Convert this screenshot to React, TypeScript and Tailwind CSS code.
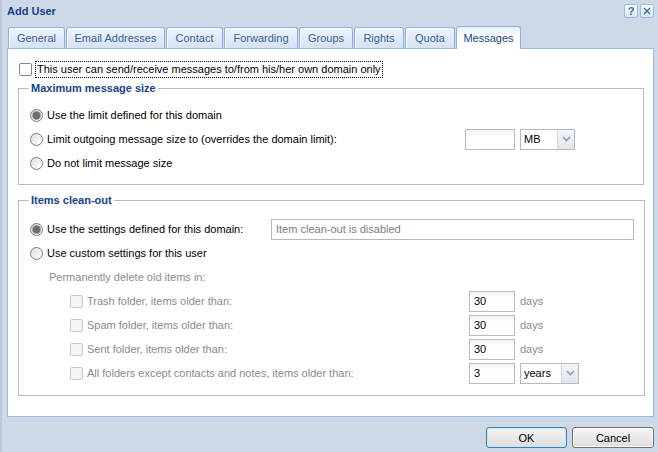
import type { ReactNode } from "react";

const tabs = [
    { label: "General", w: "w-[57px]" },
    { label: "Email Addresses", w: "w-[99px]" },
    { label: "Contact", w: "w-[57px]" },
    { label: "Forwarding", w: "w-[74px]" },
    { label: "Groups", w: "w-[54px]" },
    { label: "Rights", w: "w-[50px]" },
    { label: "Quota", w: "w-[50px]" },
    { label: "Messages", w: "w-[65px]", active: true },
];

function Radio({ checked }: { checked?: boolean }) {
    return (
        <span className="w-[13px] h-[13px] shrink-0 rounded-full border border-[#7a7a7a] bg-gradient-to-br from-[#dedede] to-white flex items-center justify-center">
            {checked && (
                <span className="w-[7px] h-[7px] rounded-full bg-[#6b6b6b] shadow-[0_0_0_1px_#9a9a9a]" />
            )}
        </span>
    );
}

function Checkbox({ disabled }: { disabled?: boolean }) {
    return (
        <span
            className={
                disabled
                    ? "w-[13px] h-[13px] shrink-0 rounded-[2px] border border-[#c9c9c9] bg-[#f4f4f4]"
                    : "w-[13px] h-[13px] shrink-0 rounded-[2px] border border-[#858585] bg-white"
            }
        />
    );
}

function Chevron() {
    return (
        <svg width="9" height="6" viewBox="0 0 9 6">
            <polyline
                points="1,1 4.5,4.5 8,1"
                fill="none"
                stroke="#8a9bb8"
                strokeWidth="1.6"
            />
        </svg>
    );
}

function Field({
    w,
    children,
    muted,
}: {
    w: string;
    children?: ReactNode;
    muted?: boolean;
}) {
    return (
        <div
            className={`${w} h-[21px] shrink-0 border border-[#b5b8c8] bg-gradient-to-b from-[#f1f1f1] to-white to-[35%] flex items-center px-[4px] ${
                muted ? "text-[#7d7d7d]" : "text-black"
            }`}
        >
            {children}
        </div>
    );
}

function Select({ w, value }: { w: string; value: string }) {
    return (
        <div
            className={`${w} h-[21px] shrink-0 border border-[#b5b8c8] bg-white flex items-stretch`}
        >
            <span className="flex-1 flex items-center pl-[3px]">{value}</span>
            <span className="w-[17px] border-l border-[#d5d8e0] bg-gradient-to-b from-[#f4f5f7] to-[#e2e5ea] flex items-center justify-center">
                <Chevron />
            </span>
        </div>
    );
}

function Row({ children }: { children: ReactNode }) {
    return <div className="h-[24px] flex items-center">{children}</div>;
}

export default function App() {
    return (
        <div className="w-[658px] h-[452px] bg-[#ced9e7] flex flex-col font-['Liberation_Sans',Arial,sans-serif] text-[11px] leading-[14px] text-black border-l-[2px] border-[#bccadc]">
            {/* title bar */}
            <div className="h-[26px] flex items-start justify-between pl-[5px] pr-[4px] pt-[4px]">
                <span className="font-bold text-[#15428b]">Add User</span>
                <div className="flex gap-[2px]">
                    <span className="w-[14px] h-[14px] rounded-[2px] border border-[#99bbe8] bg-gradient-to-b from-white to-[#d7e4f5] flex items-center justify-center text-[11px] font-bold text-[#3d6aa6] leading-none">
                        ?
                    </span>
                    <span className="w-[14px] h-[14px] rounded-[2px] border border-[#99bbe8] bg-gradient-to-b from-white to-[#d7e4f5] flex items-center justify-center">
                        <svg width="8" height="8" viewBox="0 0 8 8">
                            <path
                                d="M1 1 L7 7 M7 1 L1 7"
                                stroke="#3d6aa6"
                                strokeWidth="1.4"
                            />
                        </svg>
                    </span>
                </div>
            </div>

            {/* tabs */}
            <div className="h-[22px] flex items-end gap-[1px] pl-[6px]">
                {tabs.map((t) =>
                    t.active ? (
                        <div
                            key={t.label}
                            className={`${t.w} h-[23px] -mb-px relative z-10 rounded-t-[3px] border border-b-0 border-[#8db2e3] bg-gradient-to-b from-[#e6effb] to-white to-[45%] flex items-center justify-center text-[#15428b]`}
                        >
                            {t.label}
                        </div>
                    ) : (
                        <div
                            key={t.label}
                            className={`${t.w} h-[21px] rounded-t-[3px] border border-b-0 border-[#8db2e3] bg-gradient-to-b from-[#eef4fc] to-[#d4e2f5] shadow-[inset_1px_1px_0_#ffffff] flex items-center justify-center text-[#3f5f8c]`}
                        >
                            {t.label}
                        </div>
                    )
                )}
            </div>

            {/* panel */}
            <div className="ml-[5px] w-[647px] h-[369px] border border-[#99bbe8] bg-white pt-[11px]">
                <div className="h-[18px] flex items-center pl-[11px]">
                    <Checkbox />
                    <span className="ml-[3px] h-[17px] flex items-center border border-dotted border-black px-[1px]">
                        This user can send/receive messages to/from his/her own domain only
                    </span>
                </div>

                <fieldset className="mt-[3px] ml-[10px] mr-[9px] border border-[#b5b8c8] px-[10px] pt-[8px] pb-[9px]">
                    <legend className="px-[2px] font-bold text-[#15428b] leading-[14px]">
                        Maximum message size
                    </legend>
                    <Row>
                        <span className="flex items-center gap-[4px] pl-[1px]">
                            <Radio checked />
                            Use the limit defined for this domain
                        </span>
                    </Row>
                    <Row>
                        <span className="w-[436px] flex items-center gap-[4px] pl-[1px]">
                            <Radio />
                            Limit outgoing message size to (overrides the domain limit):
                        </span>
                        <Field w="w-[50px]" />
                        <span className="ml-[5px]">
                            <Select w="w-[55px]" value="MB" />
                        </span>
                    </Row>
                    <Row>
                        <span className="flex items-center gap-[4px] pl-[1px]">
                            <Radio />
                            Do not limit message size
                        </span>
                    </Row>
                </fieldset>

                <fieldset className="mt-[8px] ml-[10px] mr-[9px] border border-[#b5b8c8] px-[10px] pt-[10px] pb-[10px]">
                    <legend className="px-[2px] font-bold text-[#15428b] leading-[14px]">
                        Items clean-out
                    </legend>
                    <Row>
                        <span className="w-[242px] flex items-center gap-[4px] pl-[1px]">
                            <Radio checked />
                            Use the settings defined for this domain:
                        </span>
                        <div className="w-[363px] h-[21px] border border-[#b5b8c8] bg-white flex items-center px-[4px] text-[#7d7d7d]">
                            Item clean-out is disabled
                        </div>
                    </Row>
                    <Row>
                        <span className="flex items-center gap-[4px] pl-[1px]">
                            <Radio />
                            Use custom settings for this user
                        </span>
                    </Row>
                    <Row>
                        <span className="pl-[20px] text-[#8a8a8a]">
                            Permanently delete old items in:
                        </span>
                    </Row>
                    {[
                        "Trash folder, items older than:",
                        "Spam folder, items older than:",
                        "Sent folder, items older than:",
                    ].map((label) => (
                        <Row key={label}>
                            <span className="w-[440px] flex items-center gap-[4px] pl-[41px] text-[#8a8a8a]">
                                <Checkbox disabled />
                                {label}
                            </span>
                            <Field w="w-[46px]">30</Field>
                            <span className="ml-[5px] text-[#8a8a8a]">days</span>
                        </Row>
                    ))}
                    <Row>
                        <span className="w-[440px] flex items-center gap-[4px] pl-[41px] text-[#8a8a8a]">
                            <Checkbox disabled />
                            All folders except contacts and notes, items older than:
                        </span>
                        <Field w="w-[46px]">3</Field>
                        <span className="ml-[5px]">
                            <Select w="w-[59px]" value="years" />
                        </span>
                    </Row>
                </fieldset>
            </div>

            {/* footer */}
            <div className="flex justify-end gap-[5px] pt-[10px] pr-[4px]">
                <button className="w-[81px] h-[21px] rounded-[3px] border border-[#3c7fb1] bg-gradient-to-b from-[#f4f4f4] to-[#dedede] shadow-[inset_0_0_0_1px_#cfe3f3] text-[11px]">
                    OK
                </button>
                <button className="w-[82px] h-[21px] rounded-[3px] border border-[#707070] bg-gradient-to-b from-[#f4f4f4] to-[#dedede] shadow-[inset_0_0_0_1px_#fcfcfc] text-[11px]">
                    Cancel
                </button>
            </div>
        </div>
    );
}
